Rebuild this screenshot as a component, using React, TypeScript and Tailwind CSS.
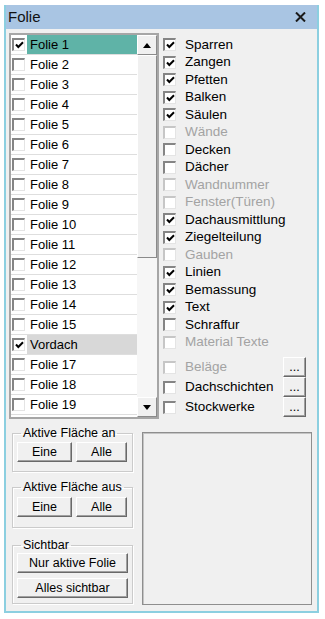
import React from 'react';

const font = { fontFamily: '"Liberation Sans", Arial, sans-serif' };

const Check = ({ checked, disabled }: { checked?: boolean; disabled?: boolean }) => (
  <span
    className={
      'w-[13px] h-[13px] shrink-0 bg-white border-t-2 border-l-2 border-b border-r flex items-center justify-center border-b-[#e4e4e4] border-r-[#e4e4e4] ' +
      (disabled ? 'border-t-[#c6c6c6] border-l-[#c6c6c6]' : 'border-t-[#858585] border-l-[#858585]')
    }
  >
    {checked && (
      <svg width="9" height="8" viewBox="0 0 9 8">
        <path d="M1 3.5 L3.3 6 L8 1.2" stroke="#000" strokeWidth="2" fill="none" />
      </svg>
    )}
  </span>
);

const Btn = ({ children, className = '' }: { children: React.ReactNode; className?: string }) => (
  <button
    className={
      'h-[20px] bg-[#f0f0f0] border border-t-white border-l-white border-r-[#696969] border-b-[#696969] shadow-[inset_-1px_-1px_0_#a0a0a0] text-[12.5px] leading-none text-black flex items-center justify-center ' +
      className
    }
  >
    {children}
  </button>
);

const folien = [
  'Folie 1', 'Folie 2', 'Folie 3', 'Folie 4', 'Folie 5', 'Folie 6', 'Folie 7', 'Folie 8',
  'Folie 9', 'Folie 10', 'Folie 11', 'Folie 12', 'Folie 13', 'Folie 14', 'Folie 15',
  'Vordach', 'Folie 17', 'Folie 18', 'Folie 19',
];

const options: { label: string; checked?: boolean; disabled?: boolean }[] = [
  { label: 'Sparren', checked: true },
  { label: 'Zangen', checked: true },
  { label: 'Pfetten', checked: true },
  { label: 'Balken', checked: true },
  { label: 'Säulen', checked: true },
  { label: 'Wände', disabled: true },
  { label: 'Decken' },
  { label: 'Dächer' },
  { label: 'Wandnummer', disabled: true },
  { label: 'Fenster(Türen)', disabled: true },
  { label: 'Dachausmittlung', checked: true },
  { label: 'Ziegelteilung', checked: true },
  { label: 'Gauben', disabled: true },
  { label: 'Linien', checked: true },
  { label: 'Bemassung', checked: true },
  { label: 'Text', checked: true },
  { label: 'Schraffur' },
  { label: 'Material Texte', disabled: true },
];

const extras = [
  { label: 'Beläge', disabled: true },
  { label: 'Dachschichten' },
  { label: 'Stockwerke' },
];

const Group = ({ title, children, className = '' }: { title: string; children: React.ReactNode; className?: string }) => (
  <fieldset className={'border border-[#cbcbcb] shadow-[1px_1px_0_#fff,inset_1px_1px_0_#fff] px-[4px] ' + className}>
    <legend className="ml-[4px] px-[2px] text-[12.5px] leading-[15px] text-black">{title}</legend>
    {children}
  </fieldset>
);

export default function App() {
  return (
    <div className="w-[325px] h-[619px] bg-white pt-[5px] pl-[4px]" style={font}>
      <div className="w-[315px] h-[608px] flex flex-col border-x-2 border-b-2 border-[#8ccfe0] bg-[#a9c5e3]">
        {/* Title bar */}
        <div className="h-[24px] flex items-center justify-between pl-[2px] pr-[11px]">
          <span className="text-[15px] text-[#111]">Folie</span>
          <svg width="11" height="10" viewBox="0 0 11 10">
            <path d="M1 0.5 L10 9.5 M10 0.5 L1 9.5" stroke="#1a1a1a" strokeWidth="2" />
          </svg>
        </div>

        {/* Body */}
        <div className="flex-1 bg-[#f0f0f0] pl-[3px] pt-[4px] flex flex-col">
          <div className="flex">
            {/* List box */}
            <div className="w-[150px] h-[386px] border-2 border-[#a6a6a6] bg-white flex">
              <div className="w-[126px] flex flex-col">
                {folien.map((f, i) => (
                  <div key={f} className="h-[20px] flex items-center pl-[1px] border-b border-[#dedede] bg-white">
                    <Check checked={i === 0 || f === 'Vordach'} />
                    <span
                      className={
                        'ml-[2px] h-[19px] flex-1 flex items-center pl-[3px] text-[13px] text-black ' +
                        (i === 0 ? 'bg-[#5fb3a7]' : f === 'Vordach' ? 'bg-[#d8d8d8]' : '')
                      }
                    >
                      {f}
                    </span>
                  </div>
                ))}
              </div>
              {/* Scrollbar */}
              <div className="w-[20px] flex flex-col bg-[#f6f6f6]">
                <div className="h-[20px] bg-[#f0f0f0] border border-t-white border-l-white border-r-[#8a8a8a] border-b-[#8a8a8a] flex items-center justify-center">
                  <svg width="8" height="5" viewBox="0 0 8 5"><path d="M0 5 L4 0 L8 5 Z" fill="#000" /></svg>
                </div>
                <div className="h-[203px] bg-[#f0f0f0] border border-t-white border-l-white border-r-[#8a8a8a] border-b-[#8a8a8a]" />
                <div className="flex-1" />
                <div className="h-[20px] bg-[#f0f0f0] border border-t-white border-l-white border-r-[#8a8a8a] border-b-[#8a8a8a] flex items-center justify-center">
                  <svg width="8" height="5" viewBox="0 0 8 5"><path d="M0 0 L8 0 L4 5 Z" fill="#000" /></svg>
                </div>
              </div>
            </div>

            {/* Options */}
            <div className="ml-[4px] w-[143px] pt-[3px] flex flex-col text-[13.5px]">
              {options.map((o) => (
                <div key={o.label} className="h-[17.5px] flex items-center">
                  <Check checked={o.checked} disabled={o.disabled} />
                  <span className={'ml-[9px] whitespace-nowrap ' + (o.disabled ? 'text-[#a3a3a3]' : 'text-black')}>{o.label}</span>
                </div>
              ))}
              <div className="mt-[6px] flex flex-col">
                {extras.map((o) => (
                  <div key={o.label} className="h-[20px] flex items-center">
                    <Check disabled={o.disabled} />
                    <span className={'ml-[9px] flex-1 whitespace-nowrap ' + (o.disabled ? 'text-[#a3a3a3]' : 'text-black')}>{o.label}</span>
                    <Btn className="w-[23px] items-end pb-[3px] text-[11px]">...</Btn>
                  </div>
                ))}
              </div>
            </div>
          </div>

          {/* Bottom */}
          <div className="flex mt-[7px]">
            <div className="ml-[3px] w-[121px] flex flex-col">
              <Group title="Aktive Fläche an" className="pb-[9px]">
                <div className="flex gap-[4px] mt-[1px]">
                  <Btn className="w-[55px]">Eine</Btn>
                  <Btn className="w-[51px]">Alle</Btn>
                </div>
              </Group>
              <Group title="Aktive Fläche aus" className="pb-[10px] mt-[8px]">
                <div className="flex gap-[4px] mt-[2px]">
                  <Btn className="w-[55px]">Eine</Btn>
                  <Btn className="w-[51px]">Alle</Btn>
                </div>
              </Group>
              <Group title="Sichtbar" className="pb-[5px] mt-[10px]">
                <div className="flex flex-col gap-[5px] mt-[0px]">
                  <Btn className="w-[111px]">Nur aktive Folie</Btn>
                  <Btn className="w-[111px]">Alles sichtbar</Btn>
                </div>
              </Group>
            </div>
            <div className="ml-[9px] mt-[6px] w-[170px] h-[173px] border border-[#8e8e8e] shadow-[inset_1px_1px_0_#c4c4c4] bg-[#f0f0f0]" />
          </div>
        </div>
      </div>
    </div>
  );
}
